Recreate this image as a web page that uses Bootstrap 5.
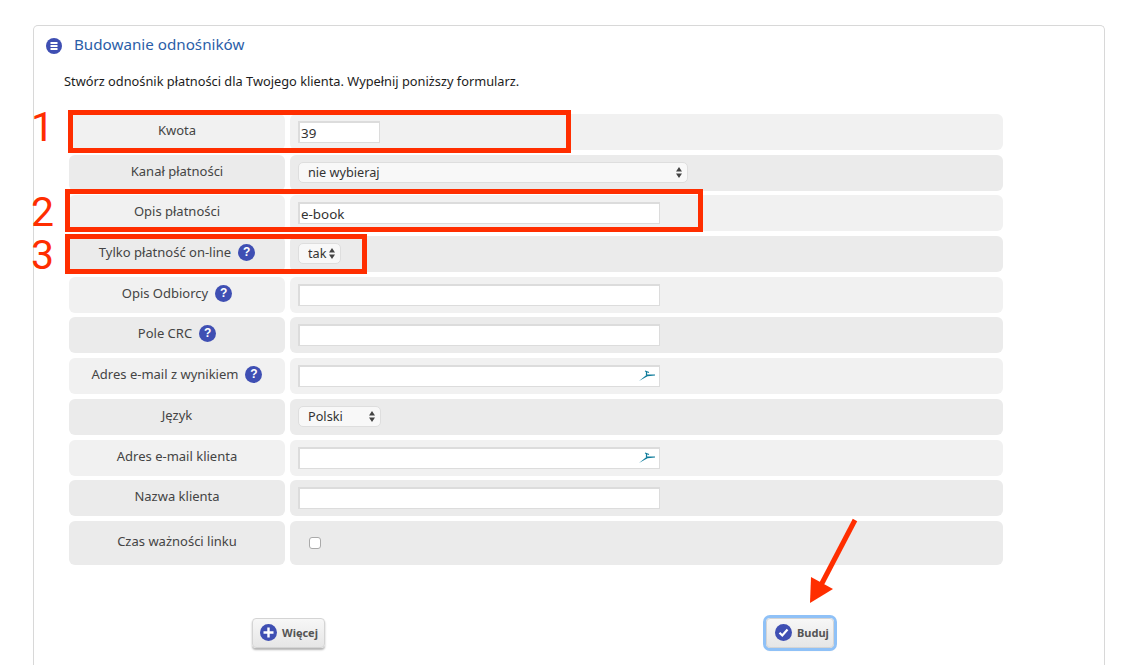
<!DOCTYPE html>
<html lang="pl">
<head>
<meta charset="utf-8">
<title>Budowanie odnośników</title>
<link href="https://cdn.jsdelivr.net/npm/bootstrap@5.3.0/dist/css/bootstrap.min.css" rel="stylesheet">
<style>
html,body{height:665px;overflow:hidden;background:#fff}
body{font-family:"Noto Sans","Open Sans",sans-serif;font-size:12.8px;color:#222;position:relative}
.panel-box{margin:25px 31px 0 33px;height:640px;border:1px solid #d8d8d8;border-bottom:0;border-radius:5px 5px 0 0;padding:0 30px 0 35px}
.panel-head{height:37px;color:#2b5ea8;font-size:15.2px;gap:12px;margin-left:-23px}
.head-ico{margin-top:3px;flex:none}
.intro{margin:9px 0 0 -5px;height:18px;line-height:18px;color:#1c1c1c;font-size:12.8px}
.form-rows{margin-top:24px;gap:4.7px;width:934px}
.form-line{gap:5px;height:36px}
.form-line.tall{height:44px}
.lbl-cell{width:216px;flex:none;border-radius:6px;padding-top:7px;line-height:18px;color:#444;gap:7px;font-size:13px}
.tall .lbl-cell{padding-top:11px}
.val-cell{flex:1;border-radius:6px;padding:7px 8px}
.form-line:nth-child(odd) .lbl-cell,.form-line:nth-child(odd) .val-cell{background:#f1f1f1}
.form-line:nth-child(even) .lbl-cell,.form-line:nth-child(even) .val-cell{background:#ebebeb}
.form-line.alt-dark .lbl-cell,.form-line.alt-dark .val-cell{background:#ebebeb}
.txt-in{display:block;height:22px;width:362px;border:1px solid #dcdcdc;border-width:2px 1px 1px 2px;background:#fff;padding:0 1px;font-family:inherit;font-size:13.4px;color:#333;outline:0}
.txt-in.short{width:82px}
.mail-box{position:relative;width:362px}
.mail-box svg{position:absolute;right:5px;top:5px}
.sel-in{display:block;height:21px;appearance:none;-webkit-appearance:none;border:1px solid #dedede;border-radius:5px;background-color:#f8f8f8;background-repeat:no-repeat;background-position:right 5px center;background-image:url("data:image/svg+xml,%3Csvg xmlns='http://www.w3.org/2000/svg' width='6' height='11'%3E%3Cpath d='M3 0 6 4.500H0zM3 11 0 6.500h6z' fill='%23444'/%3E%3C/svg%3E");padding:0 11px 0 9px;font-family:inherit;font-size:12.7px;color:#333;margin-top:0;outline:0}
.sel-wide{width:390px}.sel-tak{width:43px}.sel-lang{width:83px}
.qmark{width:17px;height:17px;flex:none;border-radius:50%;background:#3f4fb3;color:#fff;font:700 12px/17px "Liberation Sans",sans-serif;text-align:center;margin-top:1px}
.check-in{display:block;width:12px;height:12px;appearance:none;-webkit-appearance:none;border:1px solid #aaa;border-radius:3px;background:#fff;margin:9px 0 0 11px}
.action-line{margin-top:53px;margin-left:183px;width:582px}
.act-btn{height:30px;border:1px solid #d4d4d4;border-radius:4px;background:linear-gradient(#f7f7f7,#e6e6e6);box-shadow:0 2px 2px #b5b5b5;color:#555;font-weight:700;font-size:11px;gap:5px;padding:0 7px}
.act-btn svg{flex:none}
.act-btn.more{width:73px}
.act-btn.build{width:68px;padding-left:8px;outline:3px solid #8fc1f7;outline-offset:0}
.note-frame{position:absolute;border:5px solid #ff2e00;pointer-events:none}
.f1{left:68px;top:110px;width:503px;height:43px}
.f2{left:65px;top:189px;width:638px;height:43px}
.f3{left:65px;top:234px;width:302px;height:40px}
.note-num{position:absolute;color:#ff2e00;font:400 41px/30px Roboto,"Liberation Sans",sans-serif}
.n1{left:31px;top:112px}.n2{left:31px;top:197px}.n3{left:31px;top:240px}
.note-arrow{position:absolute;left:800px;top:515px}
</style>
</head>
<body>
<div class="panel-box">
  <div class="panel-head d-flex align-items-center">
    <svg class="head-ico" width="16" height="16" viewBox="0 0 16 16"><circle cx="8" cy="8" r="8" fill="#3f4fb3"/><path d="M4.500 5h7M4.500 8h7M4.500 11h7" stroke="#fff" stroke-width="1.800"/></svg>
    <span>Budowanie odnośników</span>
  </div>
  <p class="intro">Stwórz odnośnik płatności dla Twojego klienta. Wypełnij poniższy formularz.</p>
  <form class="form-rows d-flex flex-column">
    <div class="form-line d-flex"><div class="lbl-cell d-flex justify-content-center">Kwota</div><div class="val-cell"><input class="txt-in short" value="39"></div></div>
    <div class="form-line d-flex"><div class="lbl-cell d-flex justify-content-center">Kanał płatności</div><div class="val-cell"><select class="sel-in sel-wide"><option>nie wybieraj</option></select></div></div>
    <div class="form-line d-flex"><div class="lbl-cell d-flex justify-content-center">Opis płatności</div><div class="val-cell"><input class="txt-in" value="e-book"></div></div>
    <div class="form-line d-flex"><div class="lbl-cell d-flex justify-content-center">Tylko płatność on-line <span class="qmark">?</span></div><div class="val-cell"><select class="sel-in sel-tak"><option>tak</option></select></div></div>
    <div class="form-line d-flex"><div class="lbl-cell d-flex justify-content-center">Opis Odbiorcy <span class="qmark">?</span></div><div class="val-cell"><input class="txt-in"></div></div>
    <div class="form-line d-flex"><div class="lbl-cell d-flex justify-content-center">Pole CRC <span class="qmark">?</span></div><div class="val-cell"><input class="txt-in"></div></div>
    <div class="form-line d-flex"><div class="lbl-cell d-flex justify-content-center">Adres e-mail z wynikiem <span class="qmark">?</span></div><div class="val-cell"><div class="mail-box"><input class="txt-in"><svg width="16" height="11" viewBox="0 0 16 11"><path d="M0 11 8 4.500H16V5.500L8.500 6.200Z" fill="#0f7c9b"/><path d="M6 1 10 2.500M7.500 1.500V5" stroke="#0f7c9b" stroke-width="1.200" fill="none"/></svg></div></div></div>
    <div class="form-line d-flex"><div class="lbl-cell d-flex justify-content-center">Język</div><div class="val-cell"><select class="sel-in sel-lang"><option>Polski</option></select></div></div>
    <div class="form-line d-flex"><div class="lbl-cell d-flex justify-content-center">Adres e-mail klienta</div><div class="val-cell"><div class="mail-box"><input class="txt-in"><svg width="16" height="11" viewBox="0 0 16 11"><path d="M0 11 8 4.500H16V5.500L8.500 6.200Z" fill="#0f7c9b"/><path d="M6 1 10 2.500M7.500 1.500V5" stroke="#0f7c9b" stroke-width="1.200" fill="none"/></svg></div></div></div>
    <div class="form-line d-flex"><div class="lbl-cell d-flex justify-content-center">Nazwa klienta</div><div class="val-cell"><input class="txt-in"></div></div>
    <div class="form-line tall alt-dark d-flex"><div class="lbl-cell d-flex justify-content-center">Czas ważności linku</div><div class="val-cell"><input type="checkbox" class="check-in"></div></div>
  </form>
  <div class="action-line d-flex justify-content-between align-items-center">
    <button type="button" class="act-btn more d-flex align-items-center"><svg width="17" height="17" viewBox="0 0 17 17"><circle cx="8.500" cy="8.500" r="8.500" fill="#3f4fb3"/><path d="M8.500 3.500v10M3.500 8.500h10" stroke="#fff" stroke-width="2.400"/></svg>Więcej</button>
    <button type="button" class="act-btn build d-flex align-items-center"><svg width="17" height="17" viewBox="0 0 17 17"><circle cx="8.500" cy="8.500" r="8.500" fill="#3f4fb3"/><path d="M4.500 8.800 7.300 11.500 12.500 5.500" stroke="#fff" stroke-width="2.200" fill="none"/></svg>Buduj</button>
  </div>
</div>
<div class="note-frame f1"></div>
<div class="note-frame f2"></div>
<div class="note-frame f3"></div>
<span class="note-num n1">1</span><span class="note-num n2">2</span><span class="note-num n3">3</span>
<svg class="note-arrow" width="60" height="92" viewBox="800 515 60 92"><path d="M855 520 820 587" stroke="#ff2e00" stroke-width="5" fill="none"/><path d="M810 603 811 577 833 589Z" fill="#ff2e00"/></svg>
<script src="https://cdn.jsdelivr.net/npm/bootstrap@5.3.0/dist/js/bootstrap.bundle.min.js"></script>
</body>
</html>
